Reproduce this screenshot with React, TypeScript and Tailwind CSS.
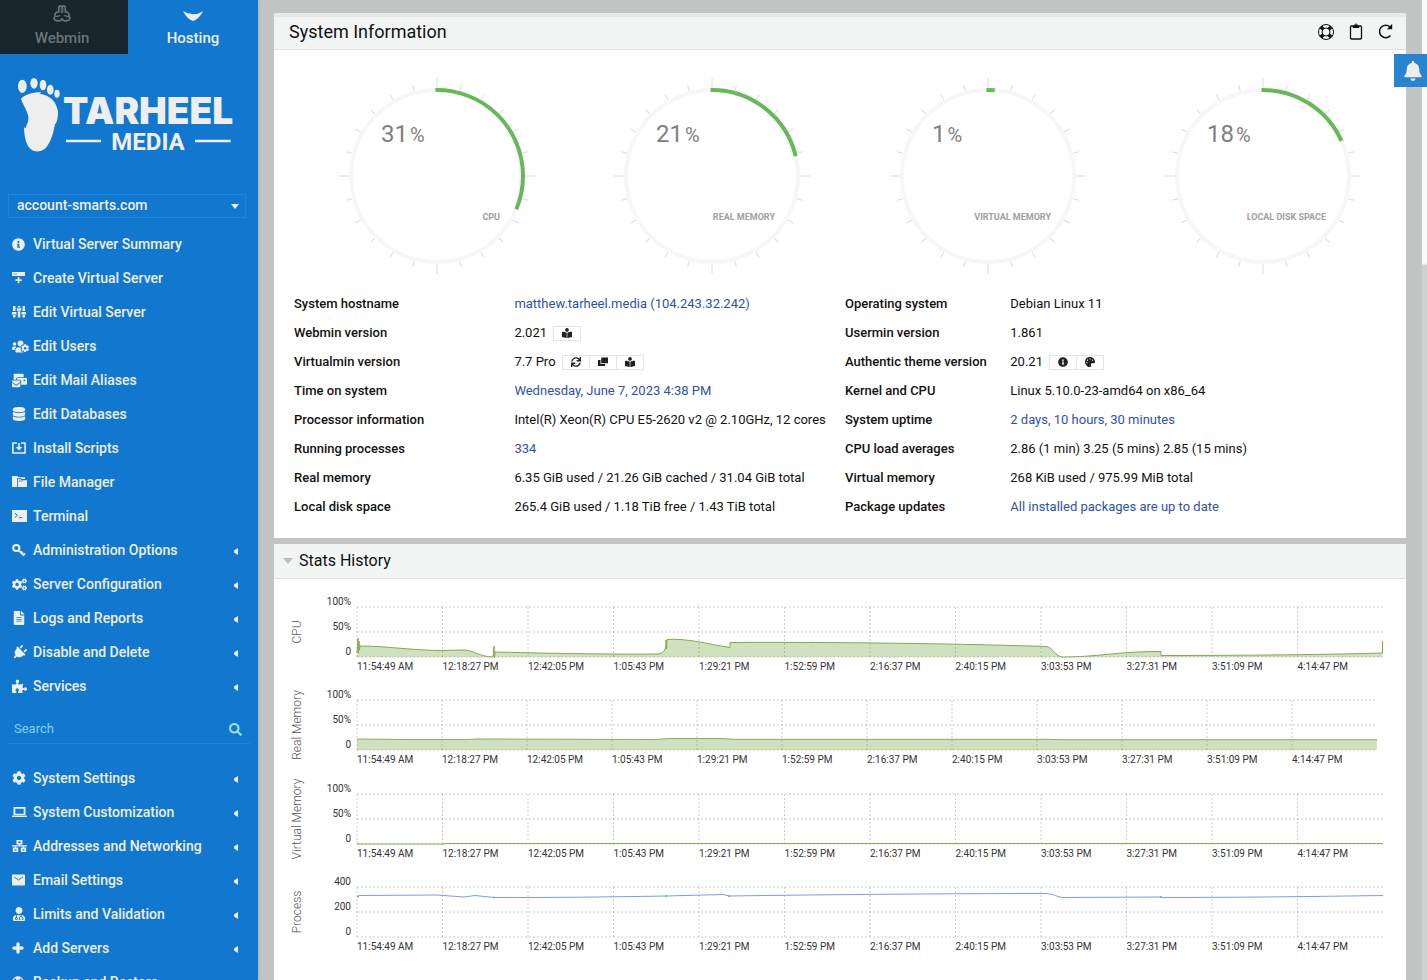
import React from "react";
import {
  FaInfoCircle, FaUsersCog, FaMailBulk, FaDatabase, FaCogs, FaFileAlt, FaPlug, FaPuzzlePiece,
  FaCog, FaUserMd, FaPlus, FaSearch, FaBell, FaBookReader, FaSync, FaPalette, FaLifeRing,
} from "react-icons/fa";

type Item = { label: string; icon: React.ReactNode; sub?: boolean };

const WebminIcon = () => (
  <svg viewBox="-10 -10 20 20" className="size-[20px]" fill="none" stroke="currentColor" strokeWidth="1.700" strokeLinecap="round" strokeLinejoin="round">
    <path d="M-3.300 -2V-6.600A1.700 1.700 0 0 1 0 -7A1.700 1.700 0 0 1 3.300 -6.600V-2C6.500 -2.300 7.600 .2 7 2.300C9 4 7 7.300 4.600 6.500C3 7.500 1 6.500 0 4.800C-1 6.500 -3 7.500 -4.600 6.500C-7 7.300 -9 4 -7 2.300C-7.600 .2 -6.500 -2.300 -3.300 -2Z" />
    <path d="M-.8 -6.500V-1.200M.8 -6.500V-1.200M-6.200 2.600L-2.200 1.600M6.200 2.600L2.200 1.600" strokeWidth="1.100" />
  </svg>
);
const CreateServerIcon = () => (
  <svg viewBox="0 0 14 14" className="size-[14px]" fill="currentColor">
    <path d="M0 1h13v4H0zM5.800 6h1.600v2.300h2.300v1.600H7.400v2.400H5.800V9.900H3.500V8.300h2.300z" />
    <path d="M1.500 2.400h1v1h-1zM3.500 2.400h1v1h-1z" fill="#1277cf" />
  </svg>
);
const SlidersIcon = () => (
  <svg viewBox="0 0 14 14" className="size-[14px]" fill="currentColor">
    <path d="M1 1h2.500v5H1zM0 7h4.500v2.500H0zM1 10h2.500v2.500H1zM5.800 1h2.500v1.500H5.800zM4.800 3.200h4.500v2.500H4.800zM5.800 6.300h2.500v6.200H5.800zM10.500 1H13v5h-2.500zM9.500 7H14v2.500H9.500zM10.500 10H13v2.500h-2.500z" />
  </svg>
);
const InstallIcon = () => (
  <svg viewBox="0 0 14 14" className="size-[14px]" fill="none" stroke="currentColor" strokeWidth="1.600">
    <path d="M5 2H.9v10h12.200V2H9M7 2v6M4.600 6L7 8.400 9.400 6" />
  </svg>
);
const FoldersIcon = () => (
  <svg viewBox="0 0 15 14" className="h-[14px] w-[15px]" fill="currentColor">
    <path d="M0 1h5.500l1 1.300H13V4H9.800L8.800 3.200H5V12H0z" />
    <path d="M5.800 4.200h3l1 1H15V12H5.800z" />
    <path d="M7 7V6h4" fill="none" stroke="#1277cf" strokeWidth=".6" />
  </svg>
);
const TerminalIcon = () => (
  <svg viewBox="0 0 15 14" className="h-[14px] w-[15px]">
    <path d="M0 1h15v12H0z" fill="currentColor" />
    <path d="M2.800 4l2.700 2.300-2.700 2.300M6.800 8.700h3.400" fill="none" stroke="#1277cf" strokeWidth="1" />
  </svg>
);
const KeyIcon = () => (
  <svg viewBox="0 0 14 14" className="size-[14px]" fill="none" stroke="currentColor" strokeWidth="2">
    <circle cx="4.300" cy="5" r="3.100" />
    <path d="M6.500 7.200l5.700 5.300M8.600 10.600l2-2M10.900 12.600l2-2.200" />
  </svg>
);
const LaptopIcon = () => (
  <svg viewBox="0 0 15 14" className="h-[14px] w-[15px]" fill="currentColor">
    <path fillRule="evenodd" d="M1.500 2h12v8h-12zM3.300 3.800v5h8.400v-5z" />
    <path d="M0 10.500h15V12H0z" />
  </svg>
);
const NetworkIcon = () => (
  <svg viewBox="0 0 15 14" className="h-[14px] w-[15px]" fill="currentColor">
    <path fillRule="evenodd" d="M4.500 1h6v4.500h-6zM6.300 2.600v1.300h2.400V2.600z" />
    <path fillRule="evenodd" d="M.8 8.500h5.400V13H.8zM2.600 10.200v1.200h1.800v-1.200zM8.800 8.500h5.400V13H8.800zM10.600 10.200v1.200h1.800v-1.200z" />
    <path d="M6.800 5h1.400v1.200H15v1.300h-2.800v1.200h-1.400V7.500H4.200v1.200H2.800V7.500H0V6.200h6.800z" />
  </svg>
);
const MailIcon = () => (
  <svg viewBox="0 0 13 14" className="h-[14px] w-[13px]">
    <rect y="1.500" width="13" height="11" rx=".6" fill="currentColor" />
    <path d="M2 4l4.500 3L11 4" fill="none" stroke="#1277cf" strokeWidth=".9" />
  </svg>
);
const WindowsIcon = () => (
  <svg viewBox="0 0 10 10" className="size-[10px]" fill="currentColor">
    <path d="M3.200 .6H10v5.600H3.200zM0 3h2.500v3.900h4.600v2H0z" />
  </svg>
);

const serverMenu: Item[] = [
  { label: "Virtual Server Summary", icon: <FaInfoCircle className="size-[13px]" /> },
  { label: "Create Virtual Server", icon: <CreateServerIcon /> },
  { label: "Edit Virtual Server", icon: <SlidersIcon /> },
  { label: "Edit Users", icon: <FaUsersCog className="size-[17px]" /> },
  { label: "Edit Mail Aliases", icon: <FaMailBulk className="size-[15px]" /> },
  { label: "Edit Databases", icon: <FaDatabase className="size-[14px]" /> },
  { label: "Install Scripts", icon: <InstallIcon /> },
  { label: "File Manager", icon: <FoldersIcon /> },
  { label: "Terminal", icon: <TerminalIcon /> },
  { label: "Administration Options", icon: <KeyIcon />, sub: true },
  { label: "Server Configuration", icon: <FaCogs className="size-[15px]" />, sub: true },
  { label: "Logs and Reports", icon: <FaFileAlt className="size-[14px]" />, sub: true },
  { label: "Disable and Delete", icon: <FaPlug className="size-[15px] rotate-45" />, sub: true },
  { label: "Services", icon: <FaPuzzlePiece className="size-[15px]" />, sub: true },
];

const systemMenu: Item[] = [
  { label: "System Settings", icon: <FaCog className="size-[14px]" />, sub: true },
  { label: "System Customization", icon: <LaptopIcon />, sub: true },
  { label: "Addresses and Networking", icon: <NetworkIcon />, sub: true },
  { label: "Email Settings", icon: <MailIcon />, sub: true },
  { label: "Limits and Validation", icon: <FaUserMd className="size-[14px]" />, sub: true },
  {
    label: "Add Servers",
    icon: <FaPlus className="size-3" stroke="currentColor" strokeWidth="40" />,
    sub: true,
  },
  { label: "Backup and Restore", icon: <FaLifeRing className="size-3" />, sub: true },
];

function Menu({ items, label }: { items: Item[]; label: string }) {
  return (
    <nav aria-label={label}>
      <ul>
        {items.map((it) => (
          <li key={it.label}>
            <a href="#" className="flex h-[34px] items-center pl-3 pr-5 text-sm font-medium text-[#eeeeee]">
              <span className="flex w-[21px] shrink-0 items-center">{it.icon}</span>
              <span className="grow whitespace-nowrap">{it.label}</span>
              {it.sub && (
                <svg viewBox="0 0 4 7" className="mt-0.5 h-[7px] w-1" fill="currentColor">
                  <path d="M4 0v7L0 4.500v-2z" />
                </svg>
              )}
            </a>
          </li>
        ))}
      </ul>
    </nav>
  );
}

function Logo() {
  return (
    <svg viewBox="0 54 258 136" className="w-full" fill="#eeeeee" role="img" aria-label="Tarheel Media">
      <g transform="scale(0.33333)">
        <ellipse cx="67" cy="259" rx="13" ry="20" />
        <ellipse cx="102" cy="250" rx="11" ry="16" />
        <ellipse cx="129" cy="255" rx="10" ry="16" />
        <ellipse cx="151" cy="269" rx="10" ry="15" />
        <ellipse cx="171" cy="281" rx="8" ry="12" />
        <path d="M63 296C75 284 98 276 124 277L119 281C150 285 170 305 174 335C175 350 170 372 165 372C160 400 153 425 138 443C128 453 116 455 106 454C85 451 73 425 72 382L76 385C80 373 86 368 85 350C83 333 70 318 63 296Z" />
        <path d="M198 419h105v8H198zM585 419h107v8H585z" />
      </g>
      <text x="63" y="124" className="font-['Inter'] text-[37px] font-black">TARHEEL</text>
      <text x="148" y="150" textAnchor="middle" className="font-['Roboto'] text-2xl font-bold">MEDIA</text>
    </svg>
  );
}

function Sidebar() {
  return (
    <aside className="z-10 w-[258px] shrink-0 overflow-hidden bg-[#1277cf] shadow-[0_0_4px_rgba(0,0,0,0.15)]">
      <div className="flex h-[54px] text-[15px] font-medium">
        <button className="flex w-32 flex-col items-center bg-[#18252d] pr-1 pt-1 text-[#6b7378]">
          <WebminIcon />
          <span className="mt-[3px] leading-[22px]">Webmin</span>
        </button>
        <button className="flex flex-1 flex-col items-center pt-[5px] text-[#eeeeee]">
          <svg viewBox="0 0 20 18" className="h-[18px] w-5" fill="currentColor">
            <path d="M0 6Q10 12.500 20 6.200Q16 14 10 16Q4 14 0 6Z" />
          </svg>
          <span className="mt-1 leading-[22px]">Hosting</span>
        </button>
      </div>
      <a href="#" className="block">
        <Logo />
      </a>
      <div className="relative mx-2 mr-3 mt-1">
        <select
          aria-label="Virtual server"
          className="h-6 w-full appearance-none border border-[#1d86dc] bg-transparent pb-0.5 pl-2 text-sm font-medium text-[#eeeeee]"
        >
          <option>account-smarts.com</option>
        </select>
        <svg viewBox="0 0 8 5" className="pointer-events-none absolute right-[7px] top-2.5 h-[5px] w-2" fill="#eeeeee">
          <path d="M0 0h8L4 5z" />
        </svg>
      </div>
      <div className="mt-[9px]">
        <Menu items={serverMenu} label="Virtual server" />
      </div>
      <div className="mx-2 mb-[17px] mt-3 flex h-[29px] items-center border-b border-[#1d86dc] pl-1.5 pr-2">
        <input
          type="search"
          placeholder="Search"
          aria-label="Search"
          className="min-w-0 grow bg-transparent text-[13px] text-[#7fd0f7] outline-none placeholder:text-[#7fd0f7]"
        />
        <FaSearch className="size-[13px] text-[#9fdcf5]" />
      </div>
      <Menu items={systemMenu} label="System" />
    </aside>
  );
}

function Gauge({ value, label }: { value: number; label: string }) {
  const r = 86;
  const c = 2 * Math.PI * r;
  return (
    <svg viewBox="-99 -99 198 198" className="size-[198px]">
      {Array.from({ length: 24 }, (_, i) => (
        <line
          key={i}
          x1="0"
          x2="0"
          y1="-88"
          y2={i % 6 === 0 ? -98 : -94}
          stroke="#dcdcdc"
          transform={`rotate(${i * 15})`}
        />
      ))}
      <circle r={r} fill="none" stroke="#f7f7f7" strokeWidth="4" />
      <circle
        r={r}
        fill="none"
        stroke="#68b85b"
        strokeWidth="4"
        strokeDasharray={`${(c * value) / 100 + 3} ${c}`}
        transform="rotate(-91)"
      />
      <text x="-56" y="-34" fill="#808080" className="text-2xl">
        {value}
        <tspan dx="2" className="text-xl">%</tspan>
      </text>
      <text x="63" y="44" textAnchor="end" fill="#a0a0a0" className="text-[9px] font-bold">{label}</text>
    </svg>
  );
}

function IconGroup({ icons }: { icons: [string, React.ReactNode][] }) {
  return (
    <span className="ml-1.5 inline-flex border border-[#e5e5e5] align-middle">
      {icons.map(([name, icon], i) => (
        <button
          key={name}
          aria-label={name}
          className={`flex h-[13px] items-center justify-center text-[10px] text-[#222222] ${i ? "w-[27px] border-l border-[#e5e5e5]" : "w-[26px]"}`}
        >
          {icon}
        </button>
      ))}
    </span>
  );
}

const A = ({ children }: { children: React.ReactNode }) => (
  <a href="#" className="text-[#2f52a8]">{children}</a>
);

const info: [string, React.ReactNode, string, React.ReactNode][] = [
  ["System hostname", <A>matthew.tarheel.media (104.243.32.242)</A>, "Operating system", "Debian Linux 11"],
  ["Webmin version", <>2.021<IconGroup icons={[["Changelog", <FaBookReader />]]} /></>, "Usermin version", "1.861"],
  [
    "Virtualmin version",
    <>7.7 Pro<IconGroup icons={[["Refresh", <FaSync />], ["Components", <WindowsIcon />], ["Changelog", <FaBookReader />]]} /></>,
    "Authentic theme version",
    <>20.21<IconGroup icons={[["About", <FaInfoCircle />], ["Theme", <FaPalette />]]} /></>,
  ],
  ["Time on system", <A>Wednesday, June 7, 2023 4:38 PM</A>, "Kernel and CPU", "Linux 5.10.0-23-amd64 on x86_64"],
  ["Processor information", "Intel(R) Xeon(R) CPU E5-2620 v2 @ 2.10GHz, 12 cores", "System uptime", <A>2 days, 10 hours, 30 minutes</A>],
  ["Running processes", <A>334</A>, "CPU load averages", "2.86 (1 min) 3.25 (5 mins) 2.85 (15 mins)"],
  ["Real memory", "6.35 GiB used / 21.26 GiB cached / 31.04 GiB total", "Virtual memory", "268 KiB used / 975.99 MiB total"],
  ["Local disk space", "265.4 GiB used / 1.18 TiB free / 1.43 TiB total", "Package updates", <A>All installed packages are up to date</A>],
];

const times = [
  "11:54:49 AM", "12:18:27 PM", "12:42:05 PM", "1:05:43 PM", "1:29:21 PM", "1:52:59 PM",
  "2:16:37 PM", "2:40:15 PM", "3:03:53 PM", "3:27:31 PM", "3:51:09 PM", "4:14:47 PM",
];

type ChartProps = { title: string; ticks: string[]; line: string; area?: boolean; color: string; width?: number; marks?: [number, number][] };

function Chart({ title, ticks, line, area, color, width = 1026, marks = [] }: ChartProps) {
  const step = width / 12;
  return (
    <div className={`flex ${width < 1026 ? "h-[94px]" : "h-[93px]"}`}>
      <div className="flex h-[85px] w-[46px] shrink-0 items-center justify-center">
        <span className="-rotate-90 whitespace-nowrap text-xs font-light text-[#555555]">{title}</span>
      </div>
      <div className="w-[31px] shrink-0 text-right text-[10px] text-[#333333]">
        {ticks.map((t) => (
          <div key={t} className="h-[25px] leading-[25px]">{t}</div>
        ))}
      </div>
      <div className={`ml-1.5 mt-[18px] grow ${width < 1026 ? "mr-[29px]" : "mr-[23px]"}`}>
        <svg viewBox={`0 0 ${width} 50`} preserveAspectRatio="none" className="block h-[50px] w-full overflow-visible">
          <g stroke="#000000" strokeOpacity="0.2" strokeDasharray="2 2">
            {[0, 25, 50].map((y) => <line key={y} x1="0" x2={width} y1={y} y2={y} />)}
            {times.map((t, i) => <line key={t} x1={i * step} x2={i * step} y1="0" y2="50" />)}
          </g>
          {area && <path d={`${line}V50H0Z`} fill="#649c2c" fillOpacity="0.3" />}
          <path d={line} fill="none" stroke={color} strokeWidth="1" />
          {marks.map(([x, y]) => <circle key={x} cx={x} cy={y} r="1" fill={color} />)}
        </svg>
        <div className="mt-1 grid grid-cols-12 text-[10px] leading-3 text-[#333333]">
          {times.map((t) => <span key={t} className="whitespace-nowrap">{t}</span>)}
        </div>
      </div>
    </div>
  );
}

const percent = ["100%", "50%", "0"];
const charts: ChartProps[] = [
  {
    title: "CPU", ticks: percent, area: true, color: "#7fab52",
    line: "M0 46L1 31L1.500 46L2 34L2.500 43L3 39C30 39 50 43 83 43.500L108 43C118 44 122 49.500 136 50L137 39L137.500 51L138 45C180 46 240 47.500 301 47C308 46 309 42 309 33L309.500 42L310 32.500C330 31 350 37 373 40.500V35.500C450 35 580 36 689 39.500C696 40 698 50 706 50C740 50 760 44.500 804 44.500V48.500C860 48.500 960 48 1025.500 46V34",
  },
  {
    title: "Real Memory", ticks: percent, area: true, color: "#86b05c", width: 1020,
    line: "M0 39L50 39.500L110 39.500L120 39L300 39.500L312 38.500H365L377 39.300H690L705 39.700H1020",
  },
  { title: "Virtual Memory", ticks: percent, area: true, color: "#86b05c", line: "M0 50L85 50L90 49.500H1026" },
  {
    title: "Process", ticks: ["400", "200", "0"], color: "#7aa0e0",
    line: "M0 10L2 8.500L80 8L107 10L118 8.500L137 10.500C190 10.700 250 10 309 9L366 7.500L372 9C480 7.500 600 6.500 689 6.500C697 7 700 10 706 10.500L804 10L806 10.500C880 10.500 960 9.500 1026 8.500",
    marks: [[1, 9.5], [137, 10.5], [309, 9], [372, 9], [804, 10]],
  },
];

export default function App() {
  return (
    <div className="relative flex h-screen overflow-hidden bg-[#c3c5c4] font-['Roboto',sans-serif] text-[13px] text-[#111111]">
      <Sidebar />
      <main className="ml-4 mr-[21px] min-w-0 grow pt-[13px]">
        <section className="border-t-4 border-[#e8e9e8] bg-white">
          <header className="flex h-[33px] items-center border-b border-[#e2e2e2] bg-[#f3f5f4] pl-[15px] pr-[11px]">
            <h1 className="grow pb-0.5 text-lg">System Information</h1>
            <div className="flex items-center gap-3 pb-0.5">
              <button aria-label="Help">
                <svg viewBox="0 0 18 18" className="size-[18px]" fill="none" stroke="#111111">
                  <circle cx="9" cy="9" r="7.500" strokeWidth="1" />
                  <circle cx="9" cy="9" r="4" strokeWidth="1" />
                  <path d="M3.700 3.700l2.600 2.600M14.300 3.700l-2.600 2.600M3.700 14.300l2.600-2.600M14.300 14.300l-2.600-2.600" strokeWidth="3.600" />
                </svg>
              </button>
              <button aria-label="Copy to clipboard">
                <svg viewBox="0 0 18 18" className="size-[18px]" fill="none" stroke="#111111" strokeWidth="1.300">
                  <rect x="3.500" y="3" width="11" height="13" rx="1" />
                  <path d="M5.800 2.500h6.400V5H5.800z" fill="#111111" stroke="none" />
                  <circle cx="9" cy="2.200" r="1.200" strokeWidth="1" />
                </svg>
              </button>
              <button aria-label="Reload">
                <svg viewBox="0 0 18 18" className="size-[18px]" fill="none" stroke="#111111" strokeWidth="1.500">
                  <path d="M13.500 12.500A6.200 6.200 0 1 1 13 4" />
                  <path d="M15.200 .8v5.400H9.800z" fill="#111111" stroke="none" />
                </svg>
              </button>
            </div>
          </header>
          <div className="grid grid-cols-4 justify-items-center pb-3.5 pl-[25px] pr-[5px] pt-[27px]">
            <Gauge value={31} label="CPU" />
            <Gauge value={21} label="REAL MEMORY" />
            <Gauge value={1} label="VIRTUAL MEMORY" />
            <Gauge value={18} label="LOCAL DISK SPACE" />
          </div>
          <div className="px-[15px] pb-[17px]">
            <table className="w-full table-fixed text-left">
              <colgroup>
                <col className="w-[20%]" />
                <col className="w-[30%]" />
                <col className="w-[15%]" />
                <col className="w-[35%]" />
              </colgroup>
              <tbody>
                {info.map(([l1, v1, l2, v2]) => (
                  <tr key={l1} className="h-[29px] whitespace-nowrap">
                    <th className="px-[5px] font-medium">{l1}</th>
                    <td className="px-[5px]">{v1}</td>
                    <th className="px-[5px] font-medium">{l2}</th>
                    <td className="px-[5px]">{v2}</td>
                  </tr>
                ))}
              </tbody>
            </table>
          </div>
        </section>
        <section className="mt-1.5 bg-white">
          <header className="flex h-[35px] items-center border-b border-[#e2e2e2] bg-[#f3f5f4] pl-[9px]">
            <button className="flex items-center gap-1.5" aria-expanded="true">
              <svg viewBox="0 0 10 6" className="h-1.5 w-2.5" fill="#b9bbba">
                <path d="M0 0h10L5 6z" />
              </svg>
              <span className="text-base">Stats History</span>
            </button>
          </header>
          <div className="pb-16 pt-[10px]">
            {charts.map((c) => <Chart key={c.title} {...c} />)}
          </div>
        </section>
      </main>
      <div className="absolute right-0 top-0 h-full w-[5px] bg-[#d0d2d1]">
        <div className="h-[265px] rounded-b-sm bg-[#fafafa]" />
      </div>
      <button aria-label="Notifications" className="absolute right-0 top-[54px] flex h-[33px] w-[33px] items-center justify-center bg-[#2883d0] pl-1 text-[#eeeeee]">
        <FaBell className="size-5" />
      </button>
    </div>
  );
}
